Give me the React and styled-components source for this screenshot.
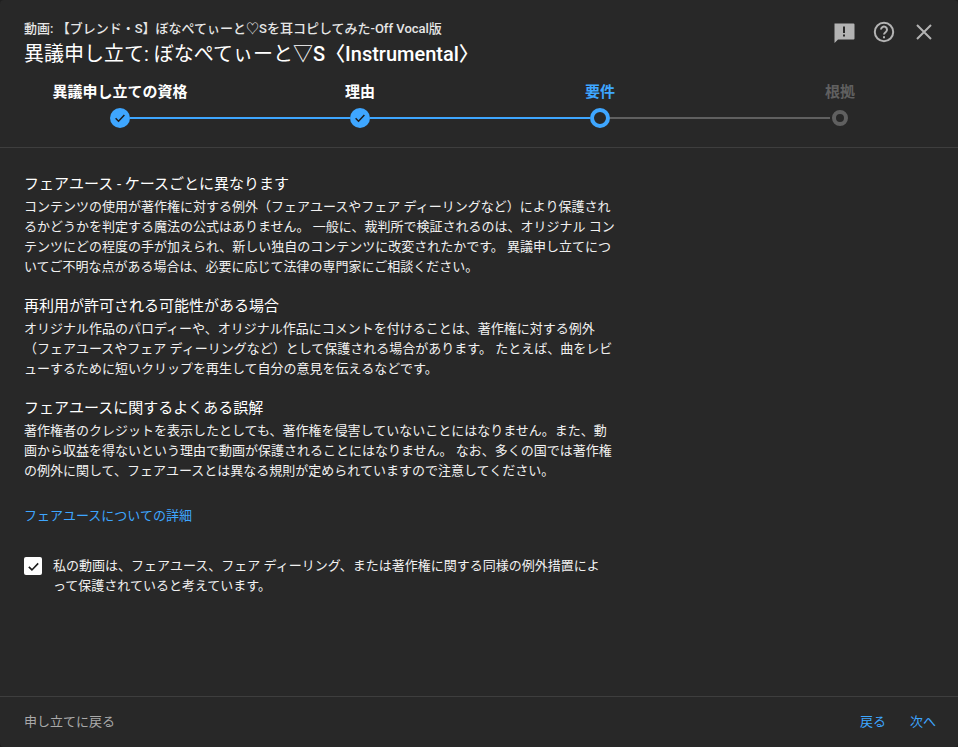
import styled, { createGlobalStyle } from "styled-components";

const GlobalStyle = createGlobalStyle`
  html, body {
    margin: 0;
    padding: 0;
    height: 100%;
    background: #1f1f1f;
  }
  body {
    font-family: Roboto, "Noto Sans CJK JP", sans-serif;
  }
`;

const Dialog = styled.div`
  width: 958px;
  height: 747px;
  box-sizing: border-box;
  display: flex;
  flex-direction: column;
  overflow: hidden;
  border-radius: 4px;
  background: #282828;
  color: #fff;
`;
const Header = styled.header`
  height: 148px;
  box-sizing: border-box;
  flex: none;
  border-bottom: 1px solid #3e3e3e;
`;
const TitleRow = styled.div`
  display: flex;
  justify-content: space-between;
  padding: 20px 22px 0 24px;
  height: 46px;
`;
const Titles = styled.div`
  min-width: 0;
`;
const VideoName = styled.div`
  font-size: 13px;
  line-height: 18px;
  font-weight: 500;
  color: #e6e6e6;
`;
const ClaimTitle = styled.h1`
  margin: 3px 0 0;
  font-size: 20px;
  line-height: 27px;
  font-weight: 400;
  white-space: nowrap;
`;
const Strong = styled.span`
  font-weight: 500;
`;
const Actions = styled.div`
  display: flex;
  gap: 16px;
  color: #b3b3b3;
`;
const IconButton = styled.span`
  width: 24px;
  height: 24px;
  display: block;
  svg {
    display: block;
  }
`;
const Stepper = styled.ol`
  margin: 0;
  padding: 0;
  list-style: none;
  display: grid;
  grid-template-columns: repeat(4, 240px);
`;
const Step = styled.li`
  display: flex;
  flex-direction: column;
  align-items: center;
  gap: 6px;
  margin-top: 16px;
`;
const StepLabel = styled.span`
  font-size: 15px;
  line-height: 20px;
  font-weight: 700;
  color: ${(p) => p.$color};
`;
const Track = styled.div`
  width: 100%;
  height: 20px;
  display: flex;
  align-items: center;
`;
const Segment = styled.div`
  flex: 1;
  height: 2px;
  background: ${(p) => p.$color};
`;
const DoneDot = styled.div`
  width: 20px;
  height: 20px;
  flex: none;
  border-radius: 50%;
  background: #3ea6ff;
  display: flex;
  align-items: center;
  justify-content: center;
  color: #1c1c1c;
`;
const RingDot = styled.div`
  box-sizing: border-box;
  width: ${(p) => p.$size}px;
  height: ${(p) => p.$size}px;
  flex: none;
  border-radius: 50%;
  border: ${(p) => p.$border}px solid ${(p) => p.$color};
  margin: 0 ${(p) => (20 - p.$size) / 2}px;
`;
const Body = styled.main`
  flex: 1;
  padding: 25px 24px 0;
  width: 592px;
`;
const Section = styled.section`
  margin-bottom: 18px;
`;
const SectionTitle = styled.h2`
  margin: 0 0 2px;
  font-size: 15px;
  line-height: 22px;
  font-weight: 400;
`;
const Paragraph = styled.p`
  margin: 0;
  font-size: 13px;
  line-height: 20px;
  color: #f1f1f1;
`;
const DetailLink = styled.a`
  display: block;
  margin-top: 25px;
  font-size: 13px;
  line-height: 20px;
  color: #3ea6ff;
`;
const Confirm = styled.label`
  display: flex;
  gap: 11px;
  margin-top: 30px;
  padding-right: 8px;
  font-size: 13px;
  line-height: 20px;
  color: #f1f1f1;
`;
const CheckBox = styled.span`
  width: 18px;
  height: 18px;
  flex: none;
  margin-top: 1px;
  border-radius: 2px;
  background: #fff;
  color: #1c1c1c;
  display: flex;
  align-items: center;
  justify-content: center;
`;
const Footer = styled.footer`
  height: 51px;
  flex: none;
  box-sizing: border-box;
  border-top: 1px solid #3e3e3e;
  display: flex;
  align-items: center;
  justify-content: space-between;
  padding: 0 22px 4px 24px;
  font-size: 13px;
`;
const BackToClaim = styled.span`
  color: #aaa;
`;
const NavButtons = styled.div`
  display: flex;
  gap: 24px;
  color: #3ea6ff;
`;

const Check = ({ size }) => (
  <svg width={size} height={size} viewBox="0 0 24 24" fill="none" stroke="currentColor" strokeWidth="2.6">
    <path d="M4.5 12.5l5 5L19.5 7" />
  </svg>
);

const App = () => {
  return (
    <Dialog>
      <GlobalStyle />
      <Header>
        <TitleRow>
          <Titles>
            <VideoName>動画: 【ブレンド・S】ぼなぺてぃーと♡Sを耳コピしてみた-Off Vocal版</VideoName>
            <ClaimTitle>
              異議申し立て: ぼなぺてぃーと▽<Strong>S〈Instrumental〉</Strong>
            </ClaimTitle>
          </Titles>
          <Actions>
            <IconButton>
              <svg width="24" height="24" viewBox="0 0 24 24" fill="currentColor">
                <path fillRule="evenodd" d="M2.5 3.5h19a1 1 0 0 1 1 1v14a1 1 0 0 1-1 1H6l-3.5 3.5zM11 6.5v6.5h2V6.5zM11 14.5v2h2v-2z" />
              </svg>
            </IconButton>
            <IconButton>
              <svg width="24" height="24" viewBox="0 0 24 24" fill="none" stroke="currentColor" strokeWidth="2">
                <circle cx="12" cy="12" r="9.2" />
                <path d="M9 9.6a3 3 0 1 1 4.8 2.4c-1.1.8-1.8 1.4-1.8 2.6" />
                <path d="M12 16.2v2" />
              </svg>
            </IconButton>
            <IconButton>
              <svg width="24" height="24" viewBox="0 0 24 24" fill="none" stroke="currentColor" strokeWidth="2">
                <path d="M5 5l14 14M19 5L5 19" />
              </svg>
            </IconButton>
          </Actions>
        </TitleRow>
        <Stepper>
          <Step>
            <StepLabel $color="#fff">異議申し立ての資格</StepLabel>
            <Track>
              <Segment $color="transparent" />
              <DoneDot><Check size={14} /></DoneDot>
              <Segment $color="#3ea6ff" />
            </Track>
          </Step>
          <Step>
            <StepLabel $color="#fff">理由</StepLabel>
            <Track>
              <Segment $color="#3ea6ff" />
              <DoneDot><Check size={14} /></DoneDot>
              <Segment $color="#3ea6ff" />
            </Track>
          </Step>
          <Step>
            <StepLabel $color="#3ea6ff">要件</StepLabel>
            <Track>
              <Segment $color="#3ea6ff" />
              <RingDot $size={20} $border={4} $color="#3ea6ff" />
              <Segment $color="#606060" />
            </Track>
          </Step>
          <Step>
            <StepLabel $color="#606060">根拠</StepLabel>
            <Track>
              <Segment $color="#606060" />
              <RingDot $size={16} $border={4} $color="#606060" />
              <Segment $color="transparent" />
            </Track>
          </Step>
        </Stepper>
      </Header>
      <Body>
        <Section>
          <SectionTitle>フェアユース - ケースごとに異なります</SectionTitle>
          <Paragraph>
            コンテンツの使用が著作権に対する例外（フェアユースやフェア ディーリングなど）により保護されるかどうかを判定する魔法の公式はありません。 一般に、裁判所で検証されるのは、オリジナル コンテンツにどの程度の手が加えられ、新しい独自のコンテンツに改変されたかです。 異議申し立てについてご不明な点がある場合は、必要に応じて法律の専門家にご相談ください。
          </Paragraph>
        </Section>
        <Section>
          <SectionTitle>再利用が許可される可能性がある場合</SectionTitle>
          <Paragraph>
            オリジナル作品のパロディーや、オリジナル作品にコメントを付けることは、著作権に対する例外（フェアユースやフェア ディーリングなど）として保護される場合があります。 たとえば、曲をレビューするために短いクリップを再生して自分の意見を伝えるなどです。
          </Paragraph>
        </Section>
        <Section>
          <SectionTitle>フェアユースに関するよくある誤解</SectionTitle>
          <Paragraph>
            著作権者のクレジットを表示したとしても、著作権を侵害していないことにはなりません。また、動画から収益を得ないという理由で動画が保護されることにはなりません。 なお、多くの国では著作権の例外に関して、フェアユースとは異なる規則が定められていますので注意してください。
          </Paragraph>
        </Section>
        <DetailLink>フェアユースについての詳細</DetailLink>
        <Confirm>
          <CheckBox><Check size={15} /></CheckBox>
          <span>私の動画は、フェアユース、フェア ディーリング、または著作権に関する同様の例外措置によって保護されていると考えています。</span>
        </Confirm>
      </Body>
      <Footer>
        <BackToClaim>申し立てに戻る</BackToClaim>
        <NavButtons>
          <span>戻る</span>
          <span>次へ</span>
        </NavButtons>
      </Footer>
    </Dialog>
  );
};

export default App;
